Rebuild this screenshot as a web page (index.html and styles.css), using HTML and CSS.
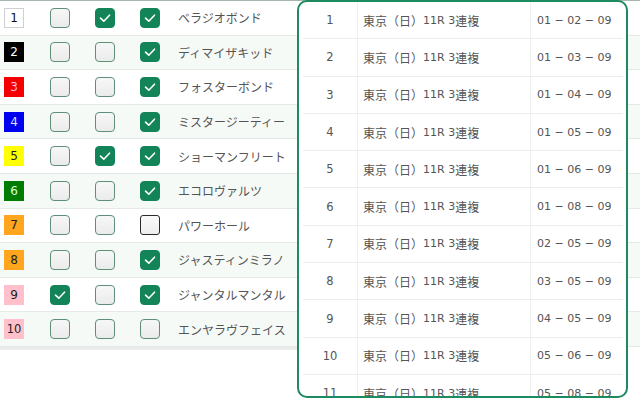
FILE: index.html
```html
<!DOCTYPE html>
<html lang="ja">
<head>
<meta charset="utf-8">
<link rel="stylesheet" href="styles.css">
</head>
<body>
<div class="page">
  <div class="list">
    <div class="row">
      <span class="num n1">1</span>
      <span class="cb"></span>
      <span class="cb on"><svg viewBox="0 0 20 20"><polyline points="5.5,10.2 8.8,13.2 14.5,7.2"/></svg></span>
      <span class="cb on"><svg viewBox="0 0 20 20"><polyline points="5.5,10.2 8.8,13.2 14.5,7.2"/></svg></span>
      <span class="name">ベラジオボンド</span>
    </div>
    <div class="row">
      <span class="num n2">2</span>
      <span class="cb"></span>
      <span class="cb"></span>
      <span class="cb on"><svg viewBox="0 0 20 20"><polyline points="5.5,10.2 8.8,13.2 14.5,7.2"/></svg></span>
      <span class="name">ディマイザキッド</span>
    </div>
    <div class="row">
      <span class="num n3">3</span>
      <span class="cb"></span>
      <span class="cb"></span>
      <span class="cb on"><svg viewBox="0 0 20 20"><polyline points="5.5,10.2 8.8,13.2 14.5,7.2"/></svg></span>
      <span class="name">フォスターボンド</span>
    </div>
    <div class="row">
      <span class="num n4">4</span>
      <span class="cb"></span>
      <span class="cb"></span>
      <span class="cb on"><svg viewBox="0 0 20 20"><polyline points="5.5,10.2 8.8,13.2 14.5,7.2"/></svg></span>
      <span class="name">ミスタージーティー</span>
    </div>
    <div class="row">
      <span class="num n5">5</span>
      <span class="cb"></span>
      <span class="cb on"><svg viewBox="0 0 20 20"><polyline points="5.5,10.2 8.8,13.2 14.5,7.2"/></svg></span>
      <span class="cb on"><svg viewBox="0 0 20 20"><polyline points="5.5,10.2 8.8,13.2 14.5,7.2"/></svg></span>
      <span class="name">ショーマンフリート</span>
    </div>
    <div class="row">
      <span class="num n6">6</span>
      <span class="cb"></span>
      <span class="cb"></span>
      <span class="cb on"><svg viewBox="0 0 20 20"><polyline points="5.5,10.2 8.8,13.2 14.5,7.2"/></svg></span>
      <span class="name">エコロヴァルツ</span>
    </div>
    <div class="row">
      <span class="num n7">7</span>
      <span class="cb"></span>
      <span class="cb"></span>
      <span class="cb focus"></span>
      <span class="name">パワーホール</span>
    </div>
    <div class="row">
      <span class="num n8">8</span>
      <span class="cb"></span>
      <span class="cb"></span>
      <span class="cb on"><svg viewBox="0 0 20 20"><polyline points="5.5,10.2 8.8,13.2 14.5,7.2"/></svg></span>
      <span class="name">ジャスティンミラノ</span>
    </div>
    <div class="row">
      <span class="num n9">9</span>
      <span class="cb on"><svg viewBox="0 0 20 20"><polyline points="5.5,10.2 8.8,13.2 14.5,7.2"/></svg></span>
      <span class="cb"></span>
      <span class="cb on"><svg viewBox="0 0 20 20"><polyline points="5.5,10.2 8.8,13.2 14.5,7.2"/></svg></span>
      <span class="name">ジャンタルマンタル</span>
    </div>
    <div class="row">
      <span class="num n10">10</span>
      <span class="cb"></span>
      <span class="cb"></span>
      <span class="cb"></span>
      <span class="name">エンヤラヴフェイス</span>
    </div>
  </div>
  <div class="band"></div>

  <div class="panel">
    <div class="tbl">
      <div class="trow"><span class="c1">1</span><span class="c2">東京（日）<i class="lat">11R 3</i>連複</span><span class="c3">01 − 02 − 09</span></div>
      <div class="trow"><span class="c1">2</span><span class="c2">東京（日）<i class="lat">11R 3</i>連複</span><span class="c3">01 − 03 − 09</span></div>
      <div class="trow"><span class="c1">3</span><span class="c2">東京（日）<i class="lat">11R 3</i>連複</span><span class="c3">01 − 04 − 09</span></div>
      <div class="trow"><span class="c1">4</span><span class="c2">東京（日）<i class="lat">11R 3</i>連複</span><span class="c3">01 − 05 − 09</span></div>
      <div class="trow"><span class="c1">5</span><span class="c2">東京（日）<i class="lat">11R 3</i>連複</span><span class="c3">01 − 06 − 09</span></div>
      <div class="trow"><span class="c1">6</span><span class="c2">東京（日）<i class="lat">11R 3</i>連複</span><span class="c3">01 − 08 − 09</span></div>
      <div class="trow"><span class="c1">7</span><span class="c2">東京（日）<i class="lat">11R 3</i>連複</span><span class="c3">02 − 05 − 09</span></div>
      <div class="trow"><span class="c1">8</span><span class="c2">東京（日）<i class="lat">11R 3</i>連複</span><span class="c3">03 − 05 − 09</span></div>
      <div class="trow"><span class="c1">9</span><span class="c2">東京（日）<i class="lat">11R 3</i>連複</span><span class="c3">04 − 05 − 09</span></div>
      <div class="trow"><span class="c1">10</span><span class="c2">東京（日）<i class="lat">11R 3</i>連複</span><span class="c3">05 − 06 − 09</span></div>
      <div class="trow"><span class="c1">11</span><span class="c2">東京（日）<i class="lat">11R 3</i>連複</span><span class="c3">05 − 08 − 09</span></div>
    </div>
  </div>
</div>
</body>
</html>
```

FILE: styles.css
```css
html, body {
  margin: 0;
  padding: 0;
  background: #fff;
}
body {
  width: 640px;
  height: 400px;
  overflow: hidden;
  font-family: "DejaVu Sans", "Noto Sans CJK JP", sans-serif;
  font-size: 12px;
  color: #555;
}
.page {
  position: relative;
  width: 640px;
  height: 400px;
}
.list {
  border-top: 1px solid #a8b8ae;
}
.row {
  display: grid;
  grid-template-columns: 46px 45px 45px 38px 1fr;
  align-items: center;
  height: 34.6px;
  box-sizing: border-box;
  padding-left: 4px;
  border-bottom: 1px solid #e6eae7;
}
.row:nth-child(even) {
  background: #f6faf7;
}
.num {
  width: 20px;
  height: 20px;
  box-sizing: border-box;
  display: flex;
  align-items: center;
  justify-content: center;
  font-size: 12px;
  color: #111;
  border: 1px solid transparent;
}
.n1 { background: #fff; border-color: #d0d0d0; }
.n2 { background: #000; color: #fff; }
.n3 { background: #f40000; color: #fbd; }
.n4 { background: #0000f0; color: #ddf; }
.n5 { background: #ffff00; color: #222; }
.n6 { background: #007d00; color: #dfd; }
.n7 { background: #ffa51e; color: #222; }
.n8 { background: #ffa51e; color: #222; }
.n9 { background: #ffc0cb; color: #222; }
.n10 { background: #ffc0cb; color: #222; font-size: 11.5px; }
.cb {
  width: 20px;
  height: 20px;
  box-sizing: border-box;
  border: 1.5px solid #5e8f79;
  border-radius: 4px;
  background: linear-gradient(#f7f7f7, #ebebeb);
  display: flex;
  align-items: center;
  justify-content: center;
}
.cb.on {
  background: #128458;
  border-color: #128458;
}
.cb.focus {
  border-color: #2a2a2a;
  border-radius: 3px;
  background: linear-gradient(#fafafa, #eeeeee);
}
.cb svg {
  width: 20px;
  height: 20px;
  flex: none;
}
.cb polyline {
  fill: none;
  stroke: #fff;
  stroke-width: 1.6;
  stroke-linecap: round;
  stroke-linejoin: round;
}
.name {
  white-space: nowrap;
  color: #555;
  font-size: 12px;
}
.band {
  width: 300px;
  height: 3px;
  background: #ececec;
}
.panel {
  position: absolute;
  left: 297px;
  top: 0;
  width: 331px;
  height: 398px;
  box-sizing: border-box;
  border: 2px solid #1e8a5f;
  border-radius: 10px;
  background: #fff;
  overflow: hidden;
  padding: 0 3px 0 4px;
}
.trow {
  display: grid;
  grid-template-columns: 55px 173px 1fr;
  height: 37.3px;
  box-sizing: border-box;
  border-bottom: 1px solid #ececec;
}
.trow > span {
  display: flex;
  align-items: center;
  white-space: nowrap;
}
.lat {
  font-style: normal;
  font-size: 11px;
  white-space: pre;
}
.c1 {
  justify-content: center;
  border-right: 1px solid #efefef;
  font-size: 11.5px;
}
.c2 {
  padding-left: 5px;
  border-right: 1px solid #efefef;
}
.c3 {
  padding-left: 6px;
  font-size: 11px;
  white-space: pre;
}
```
